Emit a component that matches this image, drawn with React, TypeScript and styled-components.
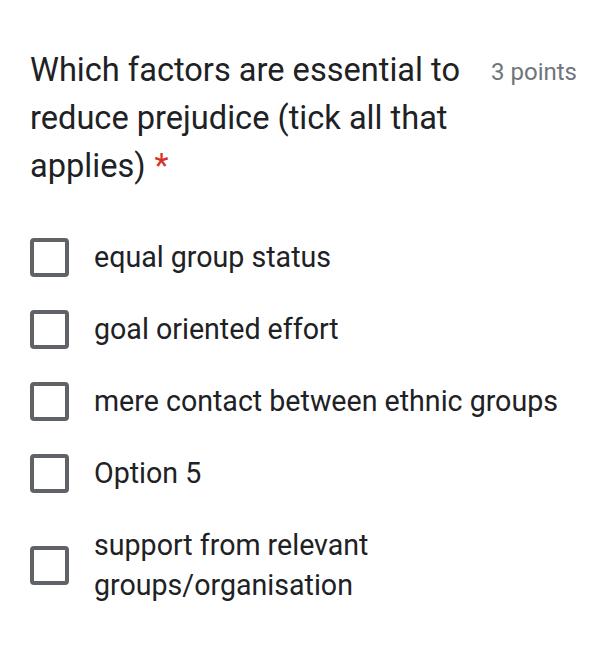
import React from "react";
import styled, { createGlobalStyle } from "styled-components";

const Global = createGlobalStyle`
  body {
    margin: 0;
    background: #ffffff;
    font-family: Roboto, "Noto Sans", Arial, sans-serif;
  }
`;

const Card = styled.div`
  padding: 46px 16px 40px 30px;
  color: #202124;
`;

const Header = styled.div`
  display: flex;
  align-items: flex-start;
  justify-content: space-between;
  gap: 20px;
`;

const Title = styled.div`
  font-size: 32.6px;
  line-height: 48px;
  max-width: 440px;
`;

const Required = styled.span`
  display: inline-block;
  color: #d93025;
  margin-left: 9px;
`;

const Points = styled.div`
  font-size: 24px;
  line-height: 52px;
  color: #70757a;
  white-space: nowrap;
`;

const Options = styled.div`
  display: flex;
  flex-direction: column;
  margin-top: 31px;
`;

const Row = styled.label`
  display: flex;
  align-items: center;
  gap: 25px;
  padding: 16px 0;
`;

const Box = styled.span`
  flex: none;
  box-sizing: border-box;
  width: 39px;
  height: 39px;
  border: 4px solid #5f6368;
  border-radius: 4px;
`;

const Label = styled.span<{ $wrap?: boolean }>`
  font-size: 28.6px;
  line-height: 40px;
  color: #202124;
  max-width: ${(p) => (p.$wrap ? "300px" : "none")};
`;

const options = [
  "equal group status",
  "goal oriented effort",
  "mere contact between ethnic groups",
  "Option 5",
  "support from relevant groups/organisation",
];

export default function App() {
  return (
    <>
      <Global />
      <Card>
        <Header>
          <Title>
            Which factors are essential to reduce prejudice (tick all that
            applies)<Required>*</Required>
          </Title>
          <Points>3 points</Points>
        </Header>
        <Options>
          {options.map((o) => (
            <Row key={o}>
              <Box />
              <Label $wrap={o.startsWith("support")}>{o}</Label>
            </Row>
          ))}
        </Options>
      </Card>
    </>
  );
}
